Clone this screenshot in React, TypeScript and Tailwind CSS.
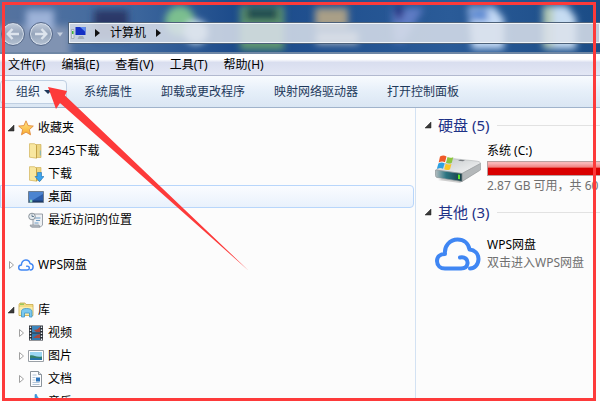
import React from "react";

const FONT =
	"font-['Noto_Sans','Noto_Sans_CJK_SC',sans-serif] text-xs leading-4 text-black";

const menus = ["文件(F)", "编辑(E)", "查看(V)", "工具(T)", "帮助(H)"];
const commands = ["系统属性", "卸载或更改程序", "映射网络驱动器", "打开控制面板"];

const Caret: React.FC<{ open?: boolean }> = ({ open }) => (
	<svg width="7" height="8" viewBox="0 0 7 8" className="shrink-0">
		{open ? (
			<path d="M6 1v6H0z" fill="#3a3a3a" stroke="#222" strokeWidth=".5" />
		) : (
			<path d="M1.5 .5v7L5.5 4z" fill="#fff" stroke="#a0a0a0" />
		)}
	</svg>
);

const StarIcon = () => (
	<svg width="16" height="16" viewBox="0 0 16 16">
		<defs>
			<linearGradient id="star" x1="0" y1="0" x2="0" y2="1">
				<stop offset="0" stopColor="#ffe68a" />
				<stop offset="1" stopColor="#f9ab2c" />
			</linearGradient>
		</defs>
		<path
			d="M8 .8l2.100 4.800 5.200.5-3.900 3.500 1.100 5.200L8 12.100l-4.500 2.700 1.100-5.200L.7 6.100l5.200-.5z"
			fill="url(#star)"
			stroke="#e08a3c"
			strokeWidth=".9"
			strokeLinejoin="round"
		/>
	</svg>
);

const FolderIcon: React.FC<{ download?: boolean }> = ({ download }) => (
	<svg width="16" height="16" viewBox="0 0 16 16">
		<path d="M6 1.500h7v13H6z" fill="#ecd582" stroke="#c9a94d" strokeWidth=".6" />
		<path d="M1.500.7h5l2 1.500v13l-7-1z" fill="#f8e7a0" stroke="#d1b35a" strokeWidth=".7" />
		<path d="M8.500 2.200v13" stroke="#b8953a" strokeWidth=".7" />
		{download ? (
			<path
				d="M9.500 6.500h4v4H16L11.500 15.700l-4.500-5.200h2.500z"
				fill="#3ba3ee"
				stroke="#1f74b8"
				strokeWidth=".6"
			/>
		) : (
			<path d="M11.800 7.500H13v5h-1.200z" fill="#8fb8b0" />
		)}
	</svg>
);

const DesktopIcon = () => (
	<svg width="16" height="16" viewBox="0 0 16 16">
		<path d="M.5 2.500h15v11H.5z" fill="#2a5cab" stroke="#6d7e92" />
		<path d="M1 3h14v2L5 11H1z" fill="#4c84d0" />
		<path d="M1 11.500h14V13H1z" fill="#1c3c6c" />
		<circle cx="3" cy="12" r="1.500" fill="#8ad5c0" />
	</svg>
);

const RecentIcon = () => (
	<svg width="16" height="16" viewBox="0 0 16 16">
		<path d="M5 2h9.500v11l-2 2H4l1-2z" fill="#edf0f3" stroke="#848c94" strokeWidth=".8" />
		<path d="M7 6h5.500M8 8.500h4M6.500 11h4" stroke="#6e9cc4" />
		<path d="M2 13h9l1 2H3z" fill="#b9c1c8" stroke="#7c858d" strokeWidth=".6" />
		<circle cx="4" cy="4.500" r="3.300" fill="#e5ebef" stroke="#8b949c" />
		<path d="M4 2.500v2h2" fill="none" stroke="#49647e" strokeWidth=".8" />
	</svg>
);

const CloudIcon: React.FC<{ className: string }> = ({ className }) => (
	<svg viewBox="0 0 46 34" className={className}>
		<path
			d="M25 20.500c5-1 8 2 7.500 6-.5 3.500-3.500 5-6.500 5H10c-4.500 0-8-3-8-7.500S5.500 17 10 17c-1-8 5-14.500 12.500-14.500 6.500 0 11 4 12 10 5 .5 9 4 9 9.500s-4 9.500-8.500 9.500"
			fill="none"
			stroke="#3f86f3"
			strokeWidth="4"
			strokeLinecap="round"
			strokeLinejoin="round"
		/>
	</svg>
);

const LibraryIcon = () => (
	<svg width="16" height="16" viewBox="0 0 16 16">
		<path d="M1 2.500L2 1h5l1 1.500h7v11H1z" fill="#f3dc84" stroke="#c8a84a" strokeWidth=".8" />
		<path d="M2 2.200h4" stroke="#6fc04d" />
		<path d="M1.500 5h13v8h-13z" fill="#fbecaa" />
		<path
			d="M3.500 15V9.500c0-2 1.500-3 5-3s5.500 1 5.500 3V15h-2.500v-4h-5v4z"
			fill="#7cc9ef"
			stroke="#3c95c7"
			strokeWidth=".8"
		/>
	</svg>
);

const VideoIcon = () => (
	<svg width="16" height="16" viewBox="0 0 16 16">
		<path d="M1 .5h14v15H1z" fill="#2a2f36" />
		<path d="M4 1h8v6.500H4z" fill="#3c86bd" />
		<path d="M4 8.500h8V15H4z" fill="#3078ae" />
		<path d="M6 5l3-.5L12 2v5H8zM5 13l4-3 3-1v4z" fill="#a8483c" />
		<path
			d="M2.500 1.500v14M13.500 1.500v14"
			stroke="#e7edf2"
			strokeWidth="1.400"
			strokeDasharray="1.5 1.5"
		/>
	</svg>
);

const PictureIcon = () => (
	<svg width="16" height="16" viewBox="0 0 16 16">
		<path d="M.5 2.500h15v11H.5z" fill="#fff" stroke="#9aa0a6" />
		<path d="M2 4h12v8H2z" fill="#9bd6f3" />
		<path d="M2 7.500c4-1 5 2 12 1V12H2z" fill="#33806a" />
		<path d="M2 10.500c5-1 8 0 12 0V12H2z" fill="#2472aa" />
	</svg>
);

const DocIcon = () => (
	<svg width="16" height="16" viewBox="0 0 16 16">
		<path d="M2.500.5h8l3 3v12h-11z" fill="#fdfdfe" stroke="#8b939b" />
		<path d="M10.500.5v3h3" fill="#dde3e8" stroke="#8b939b" />
		<path d="M4.500 4h4M4.500 6.500h3M4.500 9h3M4.500 11.500h7M4.500 13.500h7" stroke="#9eb6ce" strokeWidth=".8" />
		<path d="M8 6.500h4v4H8z" fill="#2d74bb" />
	</svg>
);

const MusicIcon = () => (
	<svg width="16" height="16" viewBox="0 0 16 16">
		<path
			d="M7 .5h1.500c.3 3.500 5 4.500 4 9.500-.5-2-2-3-4-3.500V13H7z"
			fill="#3f9fe4"
			stroke="#2a80c8"
			strokeWidth=".6"
		/>
		<ellipse cx="5.500" cy="13" rx="3" ry="2" fill="#3c9be0" />
	</svg>
);

const ComputerIcon = () => (
	<svg width="16" height="16" viewBox="0 0 16 16" className="shrink-0">
		<path d="M.5 4.500H3v9H.5z" fill="#dfe5e8" stroke="#8d979e" strokeWidth=".6" />
		<path d="M1 6h1.500v3H1z" fill="#3fb63c" />
		<path d="M4 1.500h11v9H4z" fill="#1430c4" stroke="#c9d2de" />
		<path d="M9 2h5.500v5z" fill="#5f8df0" />
		<path d="M8 11h4l1.500 3H6.500z" fill="#a3aebb" />
	</svg>
);

const DriveIcon = () => (
	<svg viewBox="0 0 46 28" className="w-[46px] h-7 shrink-0">
		<defs>
			<linearGradient id="lid" x1="0" y1="0" x2="1" y2="1">
				<stop offset="0" stopColor="#c3c7c9" />
				<stop offset="1" stopColor="#f6f7f7" />
			</linearGradient>
			<linearGradient id="front" x1="0" y1="0" x2="1" y2="0">
				<stop offset="0" stopColor="#b3bdc0" />
				<stop offset=".4" stopColor="#2b7582" />
				<stop offset="1" stopColor="#173c44" />
			</linearGradient>
		</defs>
		<path d="M3 25l22 3 19-12-2-1z" fill="#000" opacity=".18" />
		<path d="M17 3.500L41 6c3 .3 4.500 1 4.500 2.500L27 18.500 1 15z" fill="url(#lid)" stroke="#a5a9ab" strokeWidth=".5" />
		<path d="M27 18.500L45.500 8.500V15L27 26.500z" fill="#b4b8ba" stroke="#8b8f91" strokeWidth=".5" />
		<path d="M.5 15L27 18.500v8L2 22.500c-1-.3-1.500-1-1.500-2z" fill="url(#front)" stroke="#8d9598" strokeWidth=".7" />
		<path d="M23 19.500l2 .3v4.500l-2-.3z" fill="#5fe52e" />
		<path d="M25 4.800l5 .5-2 1-5-.5z" fill="#777c80" />
		<path d="M5 1.500c2.500-1.300 4.500-1.100 6.500-.1L10 7.200C8 6.200 6 6.200 3.700 7.400z" fill="#ef5a28" />
		<path d="M12.500 1.900c2 1 4 1.200 5.800 0l-1.500 5.800c-2 1.200-4 1-5.800 0z" fill="#8cc63e" />
		<path d="M3.400 8.400c2-1.200 4.200-1.200 6.200-.2L8 13.700c-2-1-4-1-6.200.3z" fill="#2fa0e0" />
		<path d="M10.700 8.700c1.900 1 3.900 1.200 5.800 0L15 14.200c-2 1.200-4 1-5.800 0z" fill="#fbc524" />
	</svg>
);

const NavButton: React.FC<{ label: string; flip?: boolean }> = ({ label, flip }) => (
	<button
		aria-label={label}
		className="w-6 h-6 shrink-0 rounded-full border border-[#56698a] bg-linear-to-b from-[#c3cddc] via-[#96a5bb] to-[#b4c1d2] shadow-[inset_0_0_0_1px_#d3dce8] flex items-center justify-center">
		<svg width="14" height="12" viewBox="0 0 14 12" className={flip ? "-scale-x-100" : ""}>
			<path
				d="M6.500 1L1.800 6l4.700 5M2 6h11"
				fill="none"
				stroke="#dde4ed"
				strokeWidth="2.500"
			/>
		</svg>
	</button>
);

// desktop icons seen through the glass title bar
const GlassBackdrop = () => (
	<svg
		className="absolute inset-0 w-full h-full"
		viewBox="0 0 600 52"
		preserveAspectRatio="none"
		aria-hidden="true">
		<defs>
			<linearGradient id="glass" x1="0" y1="0" x2="1" y2="0">
				<stop offset="0" stopColor="#56739f" />
				<stop offset=".2" stopColor="#416a9f" />
				<stop offset=".4" stopColor="#1b4a8a" />
				<stop offset=".75" stopColor="#2a5b98" />
				<stop offset="1" stopColor="#1b4c86" />
			</linearGradient>
			<filter id="soft" x="-10%" y="-50%" width="120%" height="200%">
				<feGaussianBlur stdDeviation="3.500" />
			</filter>
		</defs>
		<rect width="600" height="52" fill="url(#glass)" />
		<g filter="url(#soft)">
			<rect x="-10" y="26" width="80" height="34" fill="#8093b2" />
			<rect x="26" y="10" width="28" height="20" fill="#9db2d8" />
			<rect x="94" y="10" width="34" height="30" fill="#2b3767" />
			<circle cx="180" cy="21" r="15" fill="#7cbf8f" />
			<circle cx="196" cy="32" r="12" fill="#cfe2ee" />
			<rect x="240" y="6" width="44" height="44" fill="#5f9670" />
			<rect x="246" y="8" width="32" height="12" fill="#1c4a50" />
			<rect x="315" y="8" width="33" height="20" fill="#a99f87" />
			<rect x="316" y="32" width="42" height="12" fill="#b5bdc4" />
			<path d="M392 8h32l-20 34h-10z" fill="#5e7bc4" />
			<path d="M393 8h12l-6 14z" fill="#1c1f78" />
			<path d="M468 7h26l10 12v30h-32z" fill="#c3d9f5" />
			<rect x="470" y="9" width="18" height="12" fill="#5d8bd3" />
			<path d="M543 6h24l9 12v31h-30z" fill="#c6dcf2" />
			<rect x="543" y="6" width="10" height="42" fill="#b3c9b4" />
		</g>
	</svg>
);

interface NavItem {
	label: string;
	icon: React.ReactNode;
	caret?: "open" | "closed";
	child?: boolean;
	selected?: boolean;
}

const navGroups: NavItem[][] = [
	[
		{ label: "收藏夹", icon: <StarIcon />, caret: "open" },
		{ label: "2345下载", icon: <FolderIcon />, child: true },
		{ label: "下载", icon: <FolderIcon download />, child: true },
		{ label: "桌面", icon: <DesktopIcon />, child: true, selected: true },
		{ label: "最近访问的位置", icon: <RecentIcon />, child: true },
	],
	[{ label: "WPS网盘", icon: <CloudIcon className="w-4 h-4" />, caret: "closed" }],
	[
		{ label: "库", icon: <LibraryIcon />, caret: "open" },
		{ label: "视频", icon: <VideoIcon />, caret: "closed", child: true },
		{ label: "图片", icon: <PictureIcon />, caret: "closed", child: true },
		{ label: "文档", icon: <DocIcon />, caret: "closed", child: true },
		{ label: "音乐", icon: <MusicIcon />, caret: "closed", child: true },
	],
];

const NavRow: React.FC<{ item: NavItem }> = ({ item }) => (
	<li>
		<a
			href="#"
			className={`flex items-center h-[23px] rounded-r-sm border ${
				item.child ? "pl-[17px]" : "pl-[7px]"
			} ${
				item.selected
					? "border-[#b8d6fb] bg-linear-to-b from-[#fafcff] to-[#e9f1fc]"
					: "border-transparent"
			}`}>
			<span className="w-2 shrink-0">
				{item.caret && <Caret open={item.caret === "open"} />}
			</span>
			<span className="ml-0.5 mr-1 shrink-0">{item.icon}</span>
			<span>{item.label}</span>
		</a>
	</li>
);

const SectionTitle: React.FC<{ title: string }> = ({ title }) => (
	<div className="flex items-center h-6">
		<Caret open />
		<h2 className="ml-1.5 text-[15px] leading-6 text-[#1e3287]">{title}</h2>
		<div className="ml-2 flex-1 h-px bg-[#e2e2e2]" />
	</div>
);

export default function App() {
	return (
		<div className={`relative flex flex-col h-screen overflow-hidden bg-[#fcfcfc] ${FONT}`}>
			<header className="relative shrink-0 border-b-2 border-[#6f87a5]">
				<GlassBackdrop />
				<div className="relative flex items-start pt-[22px] pb-1.5 pl-px">
					<NavButton label="后退" />
					<div className="ml-1 flex">
						<NavButton label="前进" flip />
					</div>
					<svg width="6" height="24" viewBox="0 0 6 24" className="mx-1 shrink-0">
						<path d="M0 10.500h6l-3 4z" fill="#c4cfdf" />
					</svg>
					<div className="ml-px flex-1 flex items-center h-[22px] pl-0.5 border border-r-0 border-[#4d6179] bg-[#dce2ebd9] shadow-[inset_0_0_0_1px_#f0f4f8]">
						<ComputerIcon />
						<svg width="5" height="8" viewBox="0 0 5 8" className="ml-2">
							<path d="M0 0v8l5-4z" fill="#111" />
						</svg>
						<span className="mx-2.5">计算机</span>
						<svg width="5" height="8" viewBox="0 0 5 8">
							<path d="M0 0v8l5-4z" fill="#111" />
						</svg>
					</div>
				</div>
			</header>

			<nav className="flex shrink-0 items-center gap-4 h-[22px] pl-2 border-b border-[#b2b9cf] bg-linear-to-b from-white from-25% via-[#d9deef] via-40% to-[#e3e7f5]">
				{menus.map((menu) => (
					<button key={menu}>{menu}</button>
				))}
			</nav>

			<div className="flex shrink-0 items-center gap-[29px] h-8 border-b border-[#a0b3cb] bg-linear-to-b from-[#f8fbfe] via-[#e6eff9] to-[#dae6f3] text-[#1e395b] whitespace-nowrap">
				<button className="-mr-3 flex items-center h-6 pl-[15px] pr-3.5 gap-1 rounded-sm border border-[#bfcfe2] bg-[#f2f7fc]">
					组织
					<svg width="8" height="4" viewBox="0 0 8 4">
						<path d="M0 0h8L4 4z" fill="#1e395b" />
					</svg>
				</button>
				{commands.map((command) => (
					<button key={command}>{command}</button>
				))}
			</div>

			<main className="flex flex-1 min-h-0">
				<aside className="w-[416px] shrink-0 overflow-hidden border-r border-[#d3e2f3] pt-2 pr-px">
					<div className="flex flex-col gap-[22px]">
						{navGroups.map((group) => (
							<ul key={group[0].label}>
								{group.map((item) => (
									<NavRow key={item.label} item={item} />
								))}
							</ul>
						))}
					</div>
				</aside>

				<div className="flex-1 min-w-0 overflow-hidden pt-[5px] pl-[9px]">
					<section>
						<SectionTitle title="硬盘 (5)" />
						<div className="flex items-center gap-1.5 pl-2.5 pt-1.5 whitespace-nowrap">
							<DriveIcon />
							<div className="flex-1 min-w-0">
								<div>系统 (C:)</div>
								<div className="my-0.5 h-[15px] border border-r-0 border-[#b9a0a0] bg-linear-to-b from-[#f9b6b6] from-10% via-[#ee8080] via-40% to-[#d90000] to-45%" />
								<div className="text-[#707070]">2.87 GB 可用，共 60</div>
							</div>
						</div>
					</section>
					<section className="pt-1.5">
						<SectionTitle title="其他 (3)" />
						<div className="flex items-center gap-1.5 pl-2.5 pt-3 whitespace-nowrap">
							<CloudIcon className="w-[46px] h-[34px] shrink-0" />
							<div className="leading-[18px]">
								<div>WPS网盘</div>
								<div className="text-[#707070]">双击进入WPS网盘</div>
							</div>
						</div>
					</section>
				</div>
			</main>

			{/* annotation overlay */}
			<div className="absolute top-0.5 left-0.5 right-1 bottom-0 border-[3px] border-[#fd3a3a] pointer-events-none" />
			<svg
				width="202"
				height="186"
				viewBox="48 87 202 186"
				className="absolute top-[87px] left-12 pointer-events-none">
				<path d="M48 87l19 4-2 4.500L249 271 60 103l-4 6z" fill="#fd3a3a" />
			</svg>
		</div>
	);
}
